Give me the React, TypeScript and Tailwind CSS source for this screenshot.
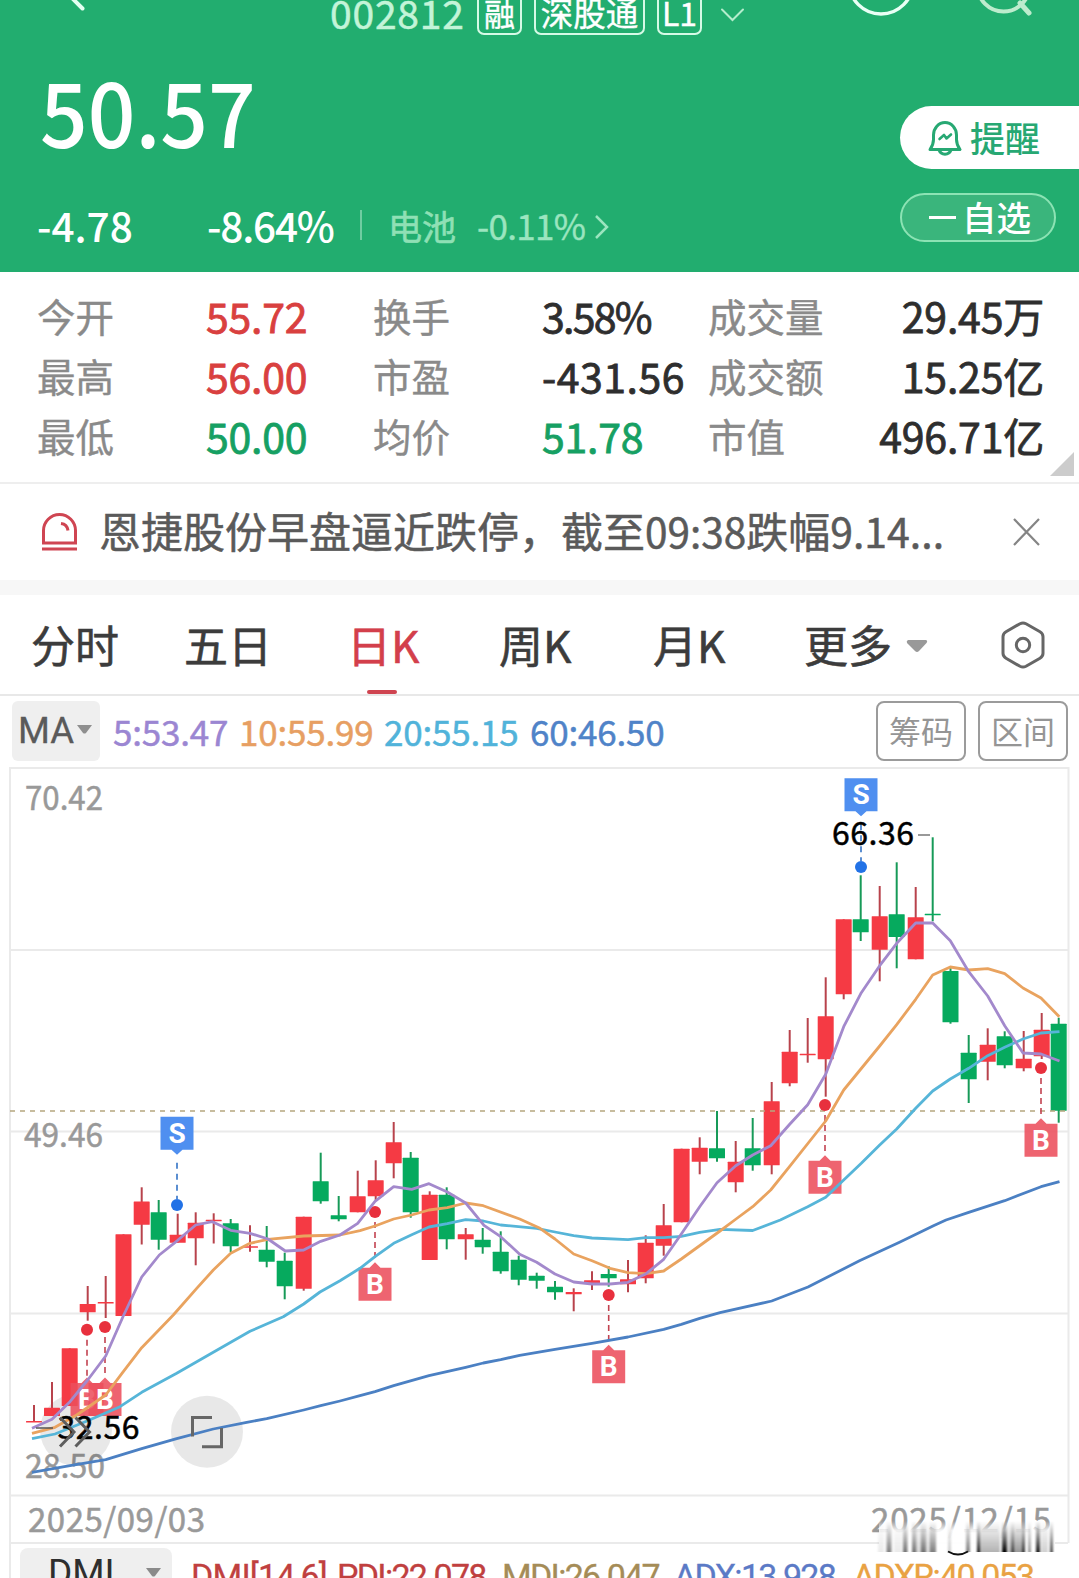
import { Fragment } from "react";
import clsx from "clsx";

const STATS = [
  [
    { label: "今开", value: "55.72", tone: "up" },
    { label: "换手", value: "3.58%", tone: "flat" },
    { label: "成交量", value: "29.45万", tone: "flat" },
  ],
  [
    { label: "最高", value: "56.00", tone: "up" },
    { label: "市盈", value: "-431.56", tone: "flat" },
    { label: "成交额", value: "15.25亿", tone: "flat" },
  ],
  [
    { label: "最低", value: "50.00", tone: "down" },
    { label: "均价", value: "51.78", tone: "down" },
    { label: "市值", value: "496.71亿", tone: "flat" },
  ],
];

const TABS = ["分时", "五日", "日K", "周K", "月K"];

// x, high, low, body top, body bottom, 1 = up / 0 = down
const CANDLES: number[][] = [
  [34, 1405, 1422, 1421, 1422.5, 1],
  [52, 1382, 1416, 1407.7, 1416, 1],
  [69.7, 1348.3, 1406, 1348.3, 1406, 1],
  [87.7, 1286, 1320.7, 1304, 1312.3, 1],
  [105.7, 1276, 1318, 1302, 1303.5, 1],
  [123.5, 1234.3, 1316, 1234.3, 1316, 1],
  [141.7, 1187.3, 1244.5, 1201.5, 1224.7, 1],
  [158.7, 1200, 1249.7, 1212.3, 1239.7, 0],
  [177.7, 1213.7, 1242.7, 1234.7, 1242.7, 1],
  [195.7, 1212.3, 1265.3, 1222.7, 1238.3, 1],
  [213.7, 1213.3, 1243.5, 1219.7, 1221.3, 1],
  [230.7, 1219, 1252, 1223.3, 1246.3, 0],
  [250, 1225.3, 1251.7, 1246.2, 1247.8, 1],
  [266.7, 1226, 1267.3, 1249.7, 1261.7, 0],
  [284.7, 1252.7, 1299.3, 1260.7, 1286.3, 0],
  [303.7, 1216.7, 1290.7, 1216.7, 1288.7, 1],
  [320.7, 1152.7, 1203.7, 1181.3, 1201.3, 0],
  [338.7, 1196, 1221.3, 1215.3, 1219.3, 0],
  [357.7, 1170.7, 1212.3, 1196.3, 1212.3, 1],
  [375.7, 1160.3, 1200, 1180.3, 1196.3, 1],
  [393.7, 1122, 1178.3, 1142.3, 1163.3, 1],
  [410.7, 1152, 1217.7, 1157.7, 1212.3, 0],
  [429.7, 1191.3, 1260, 1194.7, 1260, 1],
  [446.7, 1187.3, 1249.3, 1194.7, 1239.3, 0],
  [465.7, 1228, 1259.7, 1234.3, 1239.3, 1],
  [482.7, 1228, 1253.7, 1239.7, 1247.3, 0],
  [500.7, 1231.3, 1273.7, 1251.7, 1271.3, 0],
  [518.7, 1255.7, 1285.3, 1259.7, 1279.7, 0],
  [536.7, 1272.7, 1288.7, 1275.7, 1280.7, 0],
  [555, 1281, 1299.7, 1286.7, 1292.3, 0],
  [573.7, 1288.3, 1311.3, 1292, 1294.3, 1],
  [592, 1271.3, 1290, 1280.3, 1283.3, 1],
  [608.7, 1266.3, 1286.7, 1274, 1278.3, 0],
  [628, 1260, 1292.3, 1279.3, 1284.3, 1],
  [645.7, 1235.3, 1283.3, 1242.7, 1278.3, 1],
  [663.7, 1204, 1255.7, 1225.3, 1245.7, 1],
  [681.6, 1148.7, 1222.3, 1148.7, 1222.3, 1],
  [699.7, 1137.3, 1174.3, 1147.7, 1161.7, 1],
  [717, 1111, 1161.7, 1148.3, 1158.3, 0],
  [735.7, 1141, 1192.3, 1161.7, 1182.3, 1],
  [752.7, 1118, 1170.7, 1148.3, 1165.3, 0],
  [771.7, 1082, 1174.3, 1101.3, 1165.3, 1],
  [789.7, 1030, 1086.3, 1051.7, 1083.3, 1],
  [807.7, 1018, 1062.7, 1053.7, 1055.2, 1],
  [825.7, 977.3, 1096.7, 1016.3, 1059.3, 1],
  [843.7, 919.3, 999.3, 919.3, 994.3, 1],
  [860.7, 875.3, 941, 919.3, 932.3, 0],
  [879.7, 886, 981.3, 916.3, 949.7, 1],
  [896.7, 862.3, 968.3, 914.3, 937, 0],
  [915.7, 887, 959.3, 917.3, 959.3, 1],
  [932.7, 837.3, 921.3, 913.7, 915.2, 0],
  [950.5, 968, 1023.7, 971, 1022.3, 0],
  [968.7, 1035, 1103, 1052.7, 1079.3, 0],
  [987.7, 1028.3, 1080.3, 1044.7, 1061.7, 1],
  [1004.7, 1031.3, 1068.3, 1036.3, 1065.3, 0],
  [1023.7, 1031, 1071.3, 1058.7, 1068.3, 1],
  [1041.7, 1013, 1059, 1029.7, 1056.3, 1],
  [1058.7, 1017.7, 1122.7, 1023.7, 1110.7, 0],
];

const MA_LINES = [
  {
    color: "#4b80c3",
    points:
      "32,1472.3 70,1465.7 105.7,1459.7 141.7,1448.7 176.7,1438.7 213.3,1429 246.7,1422.3 266.7,1418.7 303.7,1410 320.7,1405.7 340,1401 360,1395.7 375,1391.7 393.7,1385.7 429,1375.7 465.7,1367.3 483.3,1363 500.7,1359.7 519.7,1355.3 555,1349.3 592,1343.3 628,1337 663.7,1329.3 681.3,1324.3 699.7,1318.3 720,1312.7 771.7,1301 808,1287 860,1260.5 899,1242.5 934,1225.5 946,1220 968.7,1212.3 1004.7,1200.7 1041,1186.7 1059.5,1181.7",
  },
  {
    color: "#56b5d8",
    points:
      "32,1438.7 55,1434 87.7,1420.7 120,1406.7 141.7,1392.3 176.7,1373.3 213.3,1352.3 250,1331.3 283.3,1316.7 303.7,1304 320,1292 340,1280.7 360,1268.3 375,1256.7 393.7,1243.3 411.7,1234.7 429,1227 447.3,1223.7 465.7,1219.7 483.3,1221 500.7,1225 536.7,1228.3 555,1232 573.7,1235.7 592,1238 628,1239.7 645.7,1237.7 663.7,1237.7 681.3,1236.3 699.7,1232.3 720,1229.3 752.7,1230.5 780.3,1220 807.7,1206.7 825.7,1197.3 843.7,1180 861.3,1163.3 879.7,1145 896.7,1129 915.7,1108.3 932.7,1091 950.3,1079 968.7,1068.3 987.7,1055.7 1004.7,1047.3 1023,1039 1041,1033 1059.5,1031.7",
  },
  {
    color: "#e9a35f",
    points:
      "32,1433.3 55,1427.3 76.7,1415 105.7,1395 123.3,1371.7 141.7,1347.7 173.3,1315 196.7,1288.3 213.3,1270 230.7,1253.3 250,1243.3 268,1239.3 303.7,1236 340,1235 360,1230.7 375,1226 393.7,1219 411.7,1215 429,1210 447.3,1207.7 465.7,1203 483.3,1205.7 519.7,1219 540,1228.3 555,1239 573.7,1254 592,1260.7 610,1268.3 628,1272.7 645.7,1273.7 663.7,1271 681.3,1259 720,1231 734.7,1220 752.7,1206.7 770.7,1190 789.7,1166.3 825.7,1121 843.7,1090 879.7,1046 896.7,1024.7 915.7,999.3 932.7,975 950.3,967 968.7,970 987.7,968.7 1004.7,973.7 1023,988 1041,998 1059.3,1016.7",
  },
  {
    color: "#a389cc",
    points:
      "32,1428.3 52,1419.3 70,1401.7 87.7,1380 105.7,1356 123.3,1316 141.7,1277 159.3,1255 177.7,1240.3 195.7,1225 212.3,1221.7 230.7,1230.3 250,1233.3 268,1239 285.3,1251 303.7,1250 320.7,1241.3 340,1235 357.7,1223.3 375,1201.3 393.7,1186.7 411.7,1189.3 429,1183.7 447.3,1192 465.7,1203 484,1225.3 500.7,1236.7 519.7,1254.3 536.7,1262.3 555,1274 573.7,1282 592,1284 610,1284 628,1282.3 645.7,1274 663.7,1259.3 681.3,1234 699.7,1206.7 717,1182.7 735.7,1165.7 752.7,1155 770.7,1145.7 789.7,1124.3 807.7,1104.7 825.7,1074.3 843.7,1026.7 861.3,992.7 879.7,965.7 896.7,943.3 915.7,923 932.7,923 950.3,940.7 968.7,971.7 987.7,996 1004.7,1025.7 1023,1053 1041,1054 1059.5,1061",
  },
];

const BUYS = [
  { x: 87, dot: 1329.7, box: 1383 },
  { x: 105, dot: 1327, box: 1383 },
  { x: 375, dot: 1212, box: 1267.7 },
  { x: 608.7, dot: 1295, box: 1350.3 },
  { x: 825, dot: 1105, box: 1160.7 },
  { x: 1041, dot: 1068, box: 1123.7 },
];

const SELLS = [
  { x: 177, dot: 1205, box: 1116.7 },
  { x: 861, dot: 867, box: 778.3 },
];

// x, width, opacity of the streaks over the end date
const STREAKS = [
  [878, 6, 0.08], [886.5, 5, 0.5], [894, 8, 0.08], [903, 4.5, 0.55], [912, 4.5, 0.55], [917, 5, 0.15],
  [921, 5, 0.55], [926, 5, 0.15], [930, 6, 0.5], [948, 3, 0.2], [966, 4, 0.5], [977, 3, 0.9],
  [980, 20, 0.3], [1002, 5, 1], [1008, 4, 0.3], [1011.5, 3, 0.8], [1015, 7, 0.4], [1022, 3, 0.8],
  [1028, 3, 0.4], [1036, 4, 0.9], [1041, 7, 0.18], [1050, 3, 0.7],
];

function Header() {
  return (
    <header className="relative h-[272px] overflow-hidden bg-[#22ad6f] text-white">
      <svg className="absolute left-0 top-0" width="1079" height="40" fill="none" strokeLinecap="round">
        <path d="M71 -3L82.500 8.500" stroke="#e4fff2" strokeWidth="4" />
        <path d="M722 9.500l10.500 10.500 10.500-10.500" stroke="#b4edcd" strokeWidth="2" />
        <circle cx="881" cy="-18" r="32" stroke="#e9fff5" strokeWidth="3.500" />
        <circle cx="1003.500" cy="-14.500" r="26" stroke="#bdeccd" strokeWidth="4" />
        <path d="M1020 3l9 10" stroke="#bdeccd" strokeWidth="5" />
      </svg>
      <div className="-mt-2 flex h-[43px] items-end pl-[330px]">
        <span className="w-[133px] pb-[2px] text-[39px] leading-[41px] tracking-[0.8px] text-[#c3f4d8] [-webkit-text-stroke:0.5px]">002812</span>
        <span className="ml-[14px] flex h-[43px] w-[45px] items-center justify-center rounded-[7px] border-2 border-[#d6fae6] pb-[2px] text-[31px] leading-none [-webkit-text-stroke:0.4px]">融</span>
        <span className="ml-3 flex h-[43px] w-[111px] items-center justify-center rounded-[7px] border-2 border-[#d6fae6] pb-[2px] text-[32.500px] leading-none [-webkit-text-stroke:0.4px]">深股通</span>
        <span className="ml-3 flex h-[43px] w-[45px] items-center justify-center rounded-[7px] border-2 border-[#d6fae6] pb-1 text-[32px] leading-none [-webkit-text-stroke:0.4px]">L1</span>
      </div>
      <div className="flex justify-between">
        <div>
          <div className="mt-[24px] origin-left scale-x-[0.93] pl-[43px] text-[90px] font-medium leading-[100px]">50.57</div>
          <div className="mt-[42px] flex h-12 items-center pl-[37px] text-[40.5px] font-medium">
            <span className="w-[170px]">-4.78</span>
            <span className="w-[153px] tracking-[-1.2px]">-8.64%</span>
            <span className="h-[30px] w-0.5 bg-[#6fcda1]" />
            <span className="ml-[26px] text-[34px] font-normal text-[#8fe0b5] [-webkit-text-stroke:0.6px]">电池</span>
            <span className="ml-[21px] w-[107px] text-[35px] font-normal tracking-[-0.7px] text-[#9be5bf] [-webkit-text-stroke:0.4px]">-0.11%</span>
            <svg className="ml-[10px] mt-1" width="16" height="26" fill="none" stroke="#9be5bf" strokeWidth="2.500">
              <path d="M2 2l11 11-11 11" />
            </svg>
          </div>
        </div>
        <div className="w-[179px] pt-[71px]">
          <div className="flex h-[63px] items-center rounded-l-full bg-white pl-[28px] text-[#27a873]">
            <svg width="34" height="36" fill="none" stroke="currentColor" strokeWidth="3" strokeLinejoin="round" strokeLinecap="round">
              <path d="M2 29.500c2.500-3.500 3.500-6 3.500-10V15a11.500 12.500 0 0 1 23 0v4.500c0 4 1 6.500 3.500 10z" />
              <path d="M11 30c2 5.500 10 5.500 12 0" />
              <path d="M11.500 19l4.500-4 2.500 3.500 4.500-4" strokeWidth="2.600" />
            </svg>
            <span className="ml-2 pb-[3px] text-[35px] font-medium leading-none">提醒</span>
          </div>
          <div className="mt-[24px] flex h-[49px] w-[156px] items-center rounded-full border-2 border-[#8ce3b4] bg-[#3ab57c] pl-[27px]">
            <span className="h-[3px] w-[27px] bg-white" />
            <span className="ml-[6px] pb-[3px] text-[34.5px] font-medium leading-none">自选</span>
          </div>
        </div>
      </div>
    </header>
  );
}

function Stats() {
  return (
    <section className="relative h-[212px] border-b-2 border-[#eeeeee] pt-[13px]">
      <div className="grid grid-cols-[169px_167px_169px_166px_141px_194px] pl-[37px]">
        {STATS.flat().map((s, i) => (
          <Fragment key={s.label}>
            <span className="h-[60px] whitespace-nowrap text-[38.5px] leading-[60px] text-[#8a8a8a] [-webkit-text-stroke:0.4px]">{s.label}</span>
            <span
              className={clsx(
                "h-[60px] whitespace-nowrap text-[41px] leading-[60px] [-webkit-text-stroke:0.8px]",
                i % 3 === 2 && "-mr-px text-right",
                s.value.endsWith("%") ? "tracking-[-1.7px]" : s.value.startsWith("-") ? "tracking-[0.5px]" : "tracking-[-0.2px]",
                s.tone === "up" && "text-[#d9403f]",
                s.tone === "down" && "text-[#16a063]",
                s.tone === "flat" && "text-[#2e2e2e]"
              )}
            >
              {s.value}
            </span>
          </Fragment>
        ))}
      </div>
      <svg className="absolute right-[5px] top-[180px]" width="24" height="24" fill="#cccccc">
        <path d="M24 0v24H0z" />
      </svg>
    </section>
  );
}

function NewsBar() {
  return (
    <div className="flex h-[96px] items-center pl-[41px] text-[#5a5a5a]">
      <svg width="38" height="38" fill="none" stroke="#cf4552" strokeWidth="3">
        <path d="M2.500 30V17.500a16 16 0 0 1 32 0V30z" />
        <path d="M1 36h35M20 10.500c4 .5 6.500 3 7 7" />
      </svg>
      <span className="ml-[20px] w-[913px] whitespace-nowrap pb-[3px] text-[42px] leading-none [-webkit-text-stroke:0.5px]">
        恩捷股份早盘逼近跌停，截至<span className="text-[40.500px]">09:38</span>跌幅<span className="text-[41px]">9.14...</span>
      </span>
      <svg width="28" height="28" fill="none" stroke="#858585" strokeWidth="2.200">
        <path d="M2 1l25 26M27 1L2 27" />
      </svg>
    </div>
  );
}

function Tabs() {
  return (
    <nav className="flex h-[101px] items-center border-b-2 border-[#e8e8e8] text-[44px] text-[#3c3c3c] [-webkit-text-stroke:0.6px]">
      <div className="grid h-full grid-cols-[153px_163px_152px_154px_151px] items-center pl-[31px]">
        {TABS.map((t) => (
          <span key={t} className={clsx("relative flex h-full items-center whitespace-nowrap pb-[2px]", t === "日K" && "text-[#d33f4b]")}>
            {t}
            {t === "日K" && <span className="absolute bottom-0 left-[20px] h-1 w-[30px] rounded-full bg-[#cf4450]" />}
          </span>
        ))}
      </div>
      <span className="pb-[2px]">更多</span>
      <svg className="ml-[14px] mt-1" width="22" height="14" fill="#999999" stroke="none">
        <path d="M2 0h18q2 1 .5 3l-7.500 8q-2 2-4 0L1 3Q0 1 2 0z" />
      </svg>
      <svg className="ml-[73px]" width="44" height="48" fill="none" stroke="#666666" strokeWidth="3">
        <path d="M19 2.700q3-1.600 6 0l14 8q3 1.800 3 5v16.600q0 3.200-3 5l-14 8q-3 1.600-6 0l-14-8q-3-1.800-3-5V15.700q0-3.200 3-5z" />
        <circle cx="22" cy="24" r="6.700" />
      </svg>
    </nav>
  );
}

function MaBar() {
  return (
    <div className="flex h-[71px] items-center pb-px pl-3 text-[35px]">
      <div className="flex h-[60px] w-[88px] items-center rounded-md bg-[#efefef] pl-[6px]">
        <span className="pt-px font-[Roboto] text-[36.500px] text-[#5a5a5a] [-webkit-text-stroke:0.3px]">MA</span>
        <svg className="mb-[3px] ml-[3px]" width="15" height="9" fill="#8f8f8f">
          <path d="M0 0h15L9 8q-1.500 1-3 0z" />
        </svg>
      </div>
      <div className="flex tracking-[-0.2px] [-webkit-text-stroke:0.5px]">
        <span className="ml-[13px] w-[126px] text-[#9b86d2]">5:53.47</span>
        <span className="w-[145px] text-[#e79f63]">10:55.99</span>
        <span className="w-[146px] text-[#51b3da]">20:55.15</span>
        <span className="text-[#4f83c8]">60:46.50</span>
      </div>
      <span className="ml-auto flex h-[60px] w-[90px] items-center justify-center rounded-lg border-2 border-[#9b9b9b] pb-[3px] text-[32px] text-[#959595]">筹码</span>
      <span className="ml-3 mr-[11px] flex h-[60px] w-[90px] items-center justify-center rounded-lg border-2 border-[#9b9b9b] pb-[3px] text-[32px] text-[#959595]">区间</span>
    </div>
  );
}

function Chart() {
  return (
    <svg className="relative block overflow-visible" width="1079" height="778" viewBox="0 767 1079 778" fill="none">
      <defs>
        <linearGradient id="streak" x1="0" y1="0" x2="0" y2="1">
          <stop offset="0" stopColor="#000" stopOpacity="0" />
          <stop offset="0.350" stopColor="#000" stopOpacity="0.350" />
          <stop offset="1" stopColor="#000" />
        </linearGradient>
        <linearGradient id="wash" x1="0" y1="0" x2="0" y2="1">
          <stop offset="0" stopColor="#fff" stopOpacity="0" />
          <stop offset="0.300" stopColor="#fff" stopOpacity="0.900" />
          <stop offset="1" stopColor="#fff" />
        </linearGradient>
        <filter id="soften" x="-5%" width="110%" y="0" height="100%">
          <feGaussianBlur stdDeviation="0.900 0" />
        </filter>
      </defs>
      <path d="M10 768H1069M10 950H1068M10 1131.500H1068M10 1313.500H1068M10 1495.500H1068M10 1543H1068M10 767V1578M1068.500 767V1543" stroke="#eaeaea" strokeWidth="2" />
      <g fill="#999999" stroke="#999999" strokeWidth="0.500" fontSize="33">
        <text x="25" y="809.500" textLength="78" lengthAdjust="spacingAndGlyphs">70.42</text>
        <text x="24" y="1146.500" textLength="79" lengthAdjust="spacingAndGlyphs">49.46</text>
        <text x="25" y="1477.500" textLength="80" lengthAdjust="spacingAndGlyphs">28.50</text>
        <text x="28" y="1531.500" textLength="177" lengthAdjust="spacing">2025/09/03</text>
        <text x="871" y="1531.500" textLength="180" lengthAdjust="spacing">2025/12/15</text>
      </g>
      <circle cx="76" cy="1430" r="36" fill="#000" fillOpacity="0.090" />
      <circle cx="207" cy="1431.700" r="36" fill="#000" fillOpacity="0.090" />

      {CANDLES.map(([x, high, low, top, bottom, up]) => (
        <g key={x}>
          <path d={`M${x} ${high}V${low}`} stroke={up ? "#b8434c" : "#179a58"} strokeWidth="2" />
          <rect x={x - 8} y={top} width="16" height={bottom - top} rx="0.500" fill={up ? "#f53a44" : "#06aa5e"} />
        </g>
      ))}
      <path d="M10 1111H1068" stroke="#b5a67f" strokeWidth="1.500" strokeDasharray="5 5" />

      {BUYS.map((b) => (
        <g key={b.x}>
          <path d={`M${b.x} ${b.dot + 10}V${b.box - 6}`} stroke="#c24350" strokeWidth="1.600" strokeDasharray="6 4" />
          <path d={`M${b.x - 16.5} ${b.box}h11l5.500-5.500 5.500 5.500h11v33h-33z`} fill="#ec4f5c" fillOpacity="0.880" />
          <text x={b.x} y={b.box + 26} fontSize="28" fontWeight="700" fill="#fff" textAnchor="middle" fontFamily="Roboto">B</text>
          <circle cx={b.x} cy={b.dot} r="6" fill="#e8303d" />
        </g>
      ))}
      {SELLS.map((s) => (
        <g key={s.x}>
          <path d={`M${s.x} ${s.box + 46}V${s.dot - 6}`} stroke="#3f7bc9" strokeWidth="1.700" strokeDasharray="6 5" />
          <path d={`M${s.x - 16.5} ${s.box}h33v33h-11l-5.500 5-5.500-5h-11z`} fill="#4f8ff0" />
          <text x={s.x} y={s.box + 26} fontSize="28" fontWeight="700" fill="#fff" textAnchor="middle" fontFamily="Roboto">S</text>
          <circle cx={s.x} cy={s.dot} r="6" fill="#2272e6" />
        </g>
      ))}

      {MA_LINES.map((line) => (
        <polyline key={line.color} points={line.points} stroke={line.color} strokeWidth="2.800" strokeLinejoin="round" />
      ))}

      <path d="M918 835h12" stroke="#777777" strokeWidth="1.500" />
      <path d="M36 1428h17" stroke="#555555" strokeWidth="1.500" />
      <g fill="#000" stroke="#000" strokeWidth="0.500" fontSize="32">
        <text x="832" y="845" textLength="82" lengthAdjust="spacing">66.36</text>
        <text x="57.500" y="1438.500" textLength="82" lengthAdjust="spacing">32.56</text>
      </g>
      <path d="M60 1417.500l14 14.500-14 14.500M75.500 1417.500l14 14.500-14 14.500" stroke="#5e5e5e" strokeWidth="3" />
      <path d="M192.500 1436.500V1417.500H212M221.500 1428V1446.700H202" stroke="#666666" strokeWidth="3" />

      <rect x="879" y="1521" width="176" height="31" fill="url(#wash)" />
      <g filter="url(#soften)">
        {STREAKS.map(([x, w, o]) => (
          <rect key={x} x={x} y="1521" width={w} height="31" fill="url(#streak)" opacity={o} />
        ))}
      </g>
      <path d="M948 1551.500q10 6 20 0" stroke="#111111" strokeWidth="2" />
    </svg>
  );
}

function DmiBar() {
  return (
    <div className="flex h-[33px] items-start overflow-hidden whitespace-nowrap pl-5 font-[Roboto] text-[34px] leading-[40px]">
      <div className="mt-[3px] flex h-[60px] w-[152px] shrink-0 rounded-lg bg-[#efefef] pl-[28px] pt-[5px]">
        <span className="w-[98px] text-[37px] text-[#2e2e2e]">DMI</span>
        <svg className="mt-[15px]" width="15" height="9" fill="#8a8a8a">
          <path d="M0 0h15L9 8q-1.500 1-3 0z" />
        </svg>
      </div>
      <div className="flex pt-[11px] tracking-[-1.7px] [-webkit-text-stroke:0.3px]">
        <span className="ml-[19px] w-[146px] tracking-[-0.8px] text-[#c0403f]">DMI[14,6]</span>
        <span className="w-[165px] text-[#c0403f]">PDI:22.078</span>
        <span className="w-[172px] text-[#a58c57]">MDI:26.047</span>
        <span className="w-[179px] text-[#5b7ac6]">ADX:13.928</span>
        <span className="text-[#e9a243]">ADXR:40.053</span>
      </div>
    </div>
  );
}

export default function App() {
  return (
    <main className="h-[1578px] w-[1079px] overflow-hidden bg-white font-['Noto_Sans_CJK_SC','Noto_Sans',sans-serif]">
      <Header />
      <Stats />
      <NewsBar />
      <div className="h-[15px] bg-[#f7f7f7]" />
      <Tabs />
      <MaBar />
      <Chart />
      <DmiBar />
    </main>
  );
}
